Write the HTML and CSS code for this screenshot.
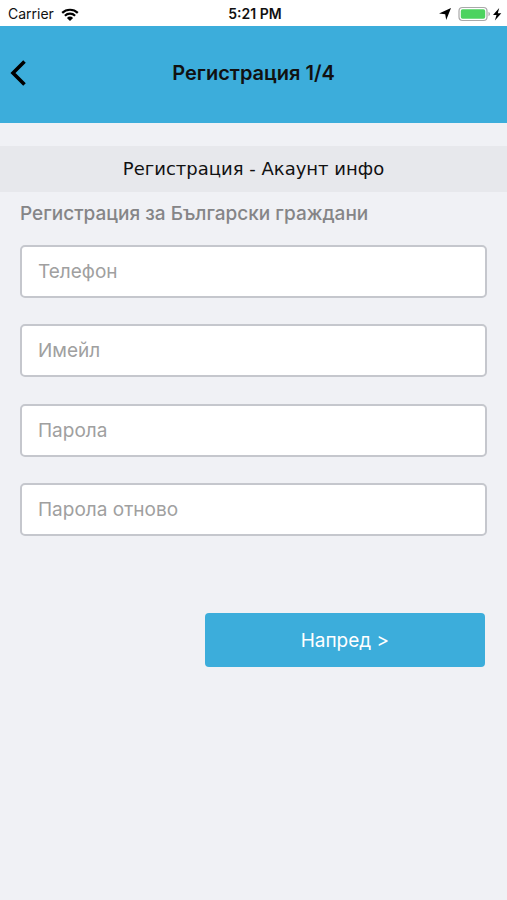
FILE: index.html
```html
<!DOCTYPE html>
<html lang="bg">
<head>
<meta charset="utf-8">
<meta name="viewport" content="width=device-width, initial-scale=1">
<title>Регистрация 1/4</title>
<link rel="stylesheet" href="styles.css">
</head>
<body>
<div class="status">
  <div class="status-left">
    <span>Carrier</span>
    <svg class="wifi" viewBox="0 0 18 13" width="18" height="13" aria-hidden="true">
      <path d="M1.2 4.9a11.2 11.2 0 0 1 15.6 0M3.9 7.8a7.3 7.3 0 0 1 10.2 0" fill="none" stroke="#000" stroke-width="2.2"/>
      <path d="M9 13 5.9 9.9a4.4 4.4 0 0 1 6.2 0z"/>
    </svg>
  </div>
  <span class="time">5:21 PM</span>
  <div class="status-right">
    <svg viewBox="0 0 12 12" width="12" height="12" aria-hidden="true"><path d="M12 0 7.2 12 6.2 6.3 0 5.4z"/></svg>
    <svg viewBox="0 0 44 16" width="44" height="16" aria-hidden="true">
      <rect x="1" y="1.5" width="28" height="13" rx="3.5" fill="#fff" stroke="#a9a9a9" stroke-width="1.2"/>
      <rect x="2.8" y="3.3" width="24.4" height="9.4" rx="1.8" fill="#4cd35f"/>
      <path d="M30.5 5.8q1.5 1 1.5 2.2t-1.5 2.2z" fill="#a9a9a9"/>
      <path d="M41.2 2 35 9h3.5l-1.6 5.5L43.3 7.2h-3.5z"/>
    </svg>
  </div>
</div>
<header class="navbar">
  <button class="back" type="button" aria-label="Назад">
    <svg viewBox="0 0 18 28" width="18" height="28" aria-hidden="true"><path d="M15.5 2.5 4 14l11.500 11.500" fill="none" stroke="#000" stroke-width="3.6"/></svg>
  </button>
  <h1>Регистрация 1/4</h1>
</header>
<main>
  <h2>Регистрация - Акаунт инфо</h2>
  <form>
    <p class="intro">Регистрация за Български граждани</p>
    <div class="fields">
      <input type="tel" aria-label="Телефон" placeholder="Телефон">
      <input type="email" aria-label="Имейл" placeholder="Имейл">
      <input type="password" aria-label="Парола" placeholder="Парола">
      <input type="password" aria-label="Парола отново" placeholder="Парола отново">
    </div>
    <button class="next" type="button">Напред &gt;</button>
  </form>
</main>
</body>
</html>
```
FILE: styles.css
```css
* {
  box-sizing: border-box;
}

body {
  margin: 0;
  min-height: 100vh;
  background: #f0f1f5;
  color: #111;
  font-family: Inter, "Liberation Sans", sans-serif;
}

h1,
h2,
p {
  margin: 0;
}

button {
  border: 0;
  padding: 0;
  font-family: inherit;
}

svg {
  display: block;
}

.status {
  display: grid;
  grid-template-columns: 1fr auto 1fr;
  align-items: center;
  height: 26px;
  padding: 2px 5px 0 8px;
  background: #fff;
  font-size: 14px;
  line-height: 24px;
}

.status-left,
.status-right {
  display: flex;
  align-items: center;
  gap: 7px;
}

.status-right {
  justify-content: flex-end;
}

.time {
  font-weight: 600;
}

.navbar {
  display: grid;
  grid-template-columns: 40px 1fr 40px;
  align-items: center;
  height: 97px;
  padding-bottom: 4px;
  background: #3caddb;
}

.back {
  display: flex;
  align-items: center;
  height: 44px;
  padding-left: 9px;
  background: none;
}

h1 {
  font-size: 20px;
  font-weight: 600;
  line-height: 24px;
  text-align: center;
}

main {
  padding-top: 23px;
}

h2 {
  padding: 10px 0;
  background: #e7e8ec;
  font-family: "DejaVu Sans", sans-serif;
  font-size: 18px;
  font-weight: 400;
  line-height: 26px;
  text-align: center;
}

form {
  display: flex;
  flex-direction: column;
  padding: 10px 20px;
}

.intro {
  color: #858587;
  font-size: 19px;
  font-weight: 500;
  line-height: 24px;
}

.fields {
  display: flex;
  flex-direction: column;
  justify-content: space-between;
  min-height: 291px;
  margin-top: 19px;
}

input {
  width: 100%;
  height: 53px;
  padding: 0 16px;
  border: 2px solid #c5c7cd;
  border-radius: 5px;
  background: #fff;
  font: 400 19px/24px Inter, "Liberation Sans", sans-serif;
}

input::placeholder {
  color: #a0a0a0;
  opacity: 1;
}

.next {
  align-self: flex-end;
  width: 60%;
  height: 54px;
  margin: 77px 2px 0 0;
  border-radius: 4px;
  background: #3caddb;
  color: #fff;
  font-size: 19px;
}
```
